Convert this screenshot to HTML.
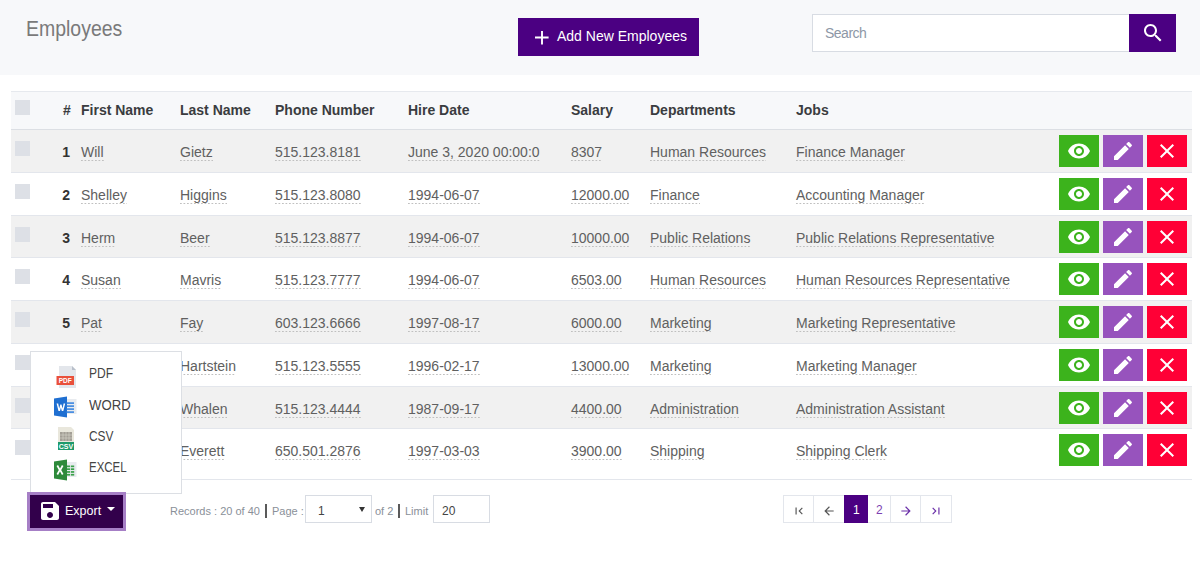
<!DOCTYPE html>
<html><head><meta charset="utf-8"><style>
*{margin:0;padding:0;box-sizing:border-box}
html,body{width:1200px;height:569px;overflow:hidden;background:#fff;font-family:"Liberation Sans",sans-serif;color:#555}
.abs{position:absolute}
.ic{position:absolute;left:8px;top:4px;width:24px;height:24px}
#top{position:absolute;left:0;top:0;width:1200px;height:75px;background:#f7f8fa}
#title{position:absolute;left:26.3px;top:16px;font-size:22px;line-height:26px;color:#7a7a7a;transform-origin:0 0;transform:scaleX(0.885);white-space:nowrap}
#add{position:absolute;left:518px;top:18px;width:181px;height:38px;background:#4b0082;color:#fff;font-size:14px}
#add .t{position:absolute;left:39px;top:10px;line-height:16px}
#search{position:absolute;left:812px;top:14px;width:318px;height:38px;background:#fff;border:1px solid #d8dce3;border-right:0}
#search .t{position:absolute;left:12px;top:10px;font-size:14px;letter-spacing:-0.5px;line-height:16px;color:#8d97a6}
#sbtn{position:absolute;left:1129px;top:14px;width:47px;height:38px;background:#4b0082}
#sbtn svg{position:absolute;left:11.5px;top:7px;width:24px;height:24px}
#thead{position:absolute;left:11px;top:91px;width:1181px;height:39px;background:#f7f8fa;border-top:1px solid #e6e9ee;border-bottom:1px solid #dcdfe4}
.hd{position:absolute;top:101.5px;font-size:14px;line-height:16px;font-weight:bold;color:#3a3c40;white-space:nowrap}
.row{position:absolute;left:11px;width:1181px;border-top:1px solid #e3e6ec}
.cb{position:absolute;left:4px;top:11px;width:15px;height:15px;background:#dde0e6}
.num{position:absolute;left:44px;width:15px;text-align:right;top:14px;font-size:14px;line-height:16px;font-weight:bold;color:#333}
.cell{position:absolute;top:14px;font-size:14px;line-height:16px;color:#606060;white-space:nowrap}
.cell u{text-decoration:none;display:inline-block;padding-bottom:1px;background-image:linear-gradient(to right,#c0c0c0 58%,rgba(0,0,0,0) 58%);background-size:3.5px 1px;background-repeat:repeat-x;background-position:0 100%}
.btn{position:absolute;top:5px;width:40px;height:32px}
.eye{left:1048px;background:#3cb31c}
.pen{left:1092px;background:#9753bd}
.del{left:1136px;background:#ff0036}
#tfoot{position:absolute;left:11px;top:479px;width:1181px;height:1px;background:#e3e6ec}
#dd{position:absolute;left:30px;top:350.5px;width:152px;height:143px;background:#fff;border:1px solid #dcdfe4}
#dd .it{position:absolute;left:57.5px;font-size:14px;line-height:16px;color:#444;transform-origin:0 0}
#export{position:absolute;left:27px;top:492px;width:98.5px;height:38.5px;background:#32004b;border:3px solid #a67fc6;color:#fff;font-size:12.5px}
#export .t{position:absolute;left:35px;top:8.5px;line-height:14px}
#export svg{position:absolute;left:8px;top:3.5px;width:24px;height:24px}
#export .caret{position:absolute;left:77px;top:11.5px;width:0;height:0;border-left:4px solid transparent;border-right:4px solid transparent;border-top:4px solid #fff}
.ft{position:absolute;top:504px;font-size:11px;line-height:14px;color:#8a9099;white-space:nowrap}
.sep{position:absolute;top:504px;width:1.6px;height:14px;background:#5a5a5a}
.box{position:absolute;top:495px;height:28px;border:1px solid #d8dce3;background:#fff;font-size:12px;color:#444}
#pg{position:absolute;left:783px;top:495px;width:169px;height:28px;border:1px solid #e3e6ec;background:#fff}
.pc{position:absolute;top:0;height:26px;border-right:1px solid #e3e6ec;font-size:12px}
.pc svg{position:absolute;width:14px;height:14px;top:7.5px}
</style></head><body>
<div id="top"></div>
<div id="title">Employees</div>
<div id="add"><svg class="abs" style="left:16.5px;top:12.6px" width="14" height="14" viewBox="0 0 14 14"><path d="M7 0V13.4M0 6.5H13.6" stroke="#fff" stroke-width="1.9"/></svg><span class="t">Add New Employees</span></div>
<div id="search"><span class="t">Search</span></div>
<div id="sbtn"><svg class="" viewBox="0 0 24 24"><path d="M15.5 14h-.79l-.28-.27C15.41 12.59 16 11.11 16 9.5 16 5.910 13.090 3 9.5 3S3 5.91 3 9.5 5.91 16 9.5 16c1.61 0 3.09-.59 4.23-1.57l.27.28v.79l5 4.99L20.49 19l-4.99-5zm-6 0C7.01 14 5 11.99 5 9.5S7.01 5 9.5 5 14 7.01 14 9.5 11.99 14 9.5 14z" fill="#fff"/></svg></div>

<div id="thead"></div>
<div class="cb" style="left:15px;top:100px"></div>
<span class="hd" style="left:63px">#</span>
<span class="hd" style="left:81px">First Name</span>
<span class="hd" style="left:180px">Last Name</span>
<span class="hd" style="left:275px">Phone Number</span>
<span class="hd" style="left:408px">Hire Date</span>
<span class="hd" style="left:571px">Salary</span>
<span class="hd" style="left:650px">Departments</span>
<span class="hd" style="left:796px">Jobs</span>

<div class="row" style="top:129.0px;height:43.75px;background:#f1f1f1;border-top-color:#dcdfe4"><div class="cb"></div><span class="num">1</span><span class="cell" style="left:70px"><u>Will</u></span><span class="cell" style="left:169px"><u>Gietz</u></span><span class="cell" style="left:264px"><u>515.123.8181</u></span><span class="cell" style="left:397px"><u>June 3, 2020 00:00:0</u></span><span class="cell" style="left:560px"><u>8307</u></span><span class="cell" style="left:639px"><u>Human Resources</u></span><span class="cell" style="left:785px"><u>Finance Manager</u></span><div class="btn eye"><svg class="ic" viewBox="0 0 24 24"><path d="M12 4.5C7 4.5 2.73 7.61 1 12c1.73 4.39 6 7.5 11 7.5s9.27-3.11 11-7.5c-1.73-4.39-6-7.5-11-7.5zM12 17c-2.76 0-5-2.24-5-5s2.24-5 5-5 5 2.24 5 5-2.24 5-5 5zm0-8c-1.66 0-3 1.34-3 3s1.34 3 3 3 3-1.34 3-3-1.34-3-3-3z" fill="#fff"/></svg></div><div class="btn pen"><svg class="ic" viewBox="0 0 24 24"><path d="M3 17.25V21h3.75L17.81 9.94l-3.75-3.75L3 17.25zM20.71 7.04c.39-.39.39-1.020 0-1.41l-2.34-2.34c-.39-.39-1.02-.39-1.41 0l-1.83 1.83 3.75 3.75 1.83-1.83z" fill="#fff"/></svg></div><div class="btn del"><svg class="ic" viewBox="0 0 24 24"><path d="M19 6.41L17.59 5 12 10.59 6.41 5 5 6.41 10.59 12 5 17.59 6.41 19 12 13.41 17.59 19 19 17.59 13.41 12z" fill="#fff"/></svg></div></div>
<div class="row" style="top:171.75px;height:43.75px;background:#fff"><div class="cb"></div><span class="num">2</span><span class="cell" style="left:70px"><u>Shelley</u></span><span class="cell" style="left:169px"><u>Higgins</u></span><span class="cell" style="left:264px"><u>515.123.8080</u></span><span class="cell" style="left:397px"><u>1994-06-07</u></span><span class="cell" style="left:560px"><u>12000.00</u></span><span class="cell" style="left:639px"><u>Finance</u></span><span class="cell" style="left:785px"><u>Accounting Manager</u></span><div class="btn eye"><svg class="ic" viewBox="0 0 24 24"><path d="M12 4.5C7 4.5 2.73 7.61 1 12c1.73 4.39 6 7.5 11 7.5s9.27-3.11 11-7.5c-1.73-4.39-6-7.5-11-7.5zM12 17c-2.76 0-5-2.24-5-5s2.24-5 5-5 5 2.24 5 5-2.24 5-5 5zm0-8c-1.66 0-3 1.34-3 3s1.34 3 3 3 3-1.34 3-3-1.34-3-3-3z" fill="#fff"/></svg></div><div class="btn pen"><svg class="ic" viewBox="0 0 24 24"><path d="M3 17.25V21h3.75L17.81 9.94l-3.75-3.75L3 17.25zM20.71 7.04c.39-.39.39-1.020 0-1.41l-2.34-2.34c-.39-.39-1.02-.39-1.41 0l-1.83 1.83 3.75 3.75 1.83-1.83z" fill="#fff"/></svg></div><div class="btn del"><svg class="ic" viewBox="0 0 24 24"><path d="M19 6.41L17.59 5 12 10.59 6.41 5 5 6.41 10.59 12 5 17.59 6.41 19 12 13.41 17.59 19 19 17.59 13.41 12z" fill="#fff"/></svg></div></div>
<div class="row" style="top:214.5px;height:43.75px;background:#f1f1f1"><div class="cb"></div><span class="num">3</span><span class="cell" style="left:70px"><u>Herm</u></span><span class="cell" style="left:169px"><u>Beer</u></span><span class="cell" style="left:264px"><u>515.123.8877</u></span><span class="cell" style="left:397px"><u>1994-06-07</u></span><span class="cell" style="left:560px"><u>10000.00</u></span><span class="cell" style="left:639px"><u>Public Relations</u></span><span class="cell" style="left:785px"><u>Public Relations Representative</u></span><div class="btn eye"><svg class="ic" viewBox="0 0 24 24"><path d="M12 4.5C7 4.5 2.73 7.61 1 12c1.73 4.39 6 7.5 11 7.5s9.27-3.11 11-7.5c-1.73-4.39-6-7.5-11-7.5zM12 17c-2.76 0-5-2.24-5-5s2.24-5 5-5 5 2.24 5 5-2.24 5-5 5zm0-8c-1.66 0-3 1.34-3 3s1.34 3 3 3 3-1.34 3-3-1.34-3-3-3z" fill="#fff"/></svg></div><div class="btn pen"><svg class="ic" viewBox="0 0 24 24"><path d="M3 17.25V21h3.75L17.81 9.94l-3.75-3.75L3 17.25zM20.71 7.04c.39-.39.39-1.020 0-1.41l-2.34-2.34c-.39-.39-1.02-.39-1.41 0l-1.83 1.83 3.75 3.75 1.83-1.83z" fill="#fff"/></svg></div><div class="btn del"><svg class="ic" viewBox="0 0 24 24"><path d="M19 6.41L17.59 5 12 10.59 6.41 5 5 6.41 10.59 12 5 17.59 6.41 19 12 13.41 17.59 19 19 17.59 13.41 12z" fill="#fff"/></svg></div></div>
<div class="row" style="top:257.25px;height:43.75px;background:#fff"><div class="cb"></div><span class="num">4</span><span class="cell" style="left:70px"><u>Susan</u></span><span class="cell" style="left:169px"><u>Mavris</u></span><span class="cell" style="left:264px"><u>515.123.7777</u></span><span class="cell" style="left:397px"><u>1994-06-07</u></span><span class="cell" style="left:560px"><u>6503.00</u></span><span class="cell" style="left:639px"><u>Human Resources</u></span><span class="cell" style="left:785px"><u>Human Resources Representative</u></span><div class="btn eye"><svg class="ic" viewBox="0 0 24 24"><path d="M12 4.5C7 4.5 2.73 7.61 1 12c1.73 4.39 6 7.5 11 7.5s9.27-3.11 11-7.5c-1.73-4.39-6-7.5-11-7.5zM12 17c-2.76 0-5-2.24-5-5s2.24-5 5-5 5 2.24 5 5-2.24 5-5 5zm0-8c-1.66 0-3 1.34-3 3s1.34 3 3 3 3-1.34 3-3-1.34-3-3-3z" fill="#fff"/></svg></div><div class="btn pen"><svg class="ic" viewBox="0 0 24 24"><path d="M3 17.25V21h3.75L17.81 9.94l-3.75-3.75L3 17.25zM20.71 7.04c.39-.39.39-1.020 0-1.41l-2.34-2.34c-.39-.39-1.02-.39-1.41 0l-1.83 1.83 3.75 3.75 1.83-1.83z" fill="#fff"/></svg></div><div class="btn del"><svg class="ic" viewBox="0 0 24 24"><path d="M19 6.41L17.59 5 12 10.59 6.41 5 5 6.41 10.59 12 5 17.59 6.41 19 12 13.41 17.59 19 19 17.59 13.41 12z" fill="#fff"/></svg></div></div>
<div class="row" style="top:300.0px;height:43.75px;background:#f1f1f1"><div class="cb"></div><span class="num">5</span><span class="cell" style="left:70px"><u>Pat</u></span><span class="cell" style="left:169px"><u>Fay</u></span><span class="cell" style="left:264px"><u>603.123.6666</u></span><span class="cell" style="left:397px"><u>1997-08-17</u></span><span class="cell" style="left:560px"><u>6000.00</u></span><span class="cell" style="left:639px"><u>Marketing</u></span><span class="cell" style="left:785px"><u>Marketing Representative</u></span><div class="btn eye"><svg class="ic" viewBox="0 0 24 24"><path d="M12 4.5C7 4.5 2.73 7.61 1 12c1.73 4.39 6 7.5 11 7.5s9.27-3.11 11-7.5c-1.73-4.39-6-7.5-11-7.5zM12 17c-2.76 0-5-2.24-5-5s2.24-5 5-5 5 2.24 5 5-2.24 5-5 5zm0-8c-1.66 0-3 1.34-3 3s1.34 3 3 3 3-1.34 3-3-1.34-3-3-3z" fill="#fff"/></svg></div><div class="btn pen"><svg class="ic" viewBox="0 0 24 24"><path d="M3 17.25V21h3.75L17.81 9.94l-3.75-3.75L3 17.25zM20.71 7.04c.39-.39.39-1.020 0-1.41l-2.34-2.34c-.39-.39-1.02-.39-1.41 0l-1.83 1.83 3.75 3.75 1.83-1.83z" fill="#fff"/></svg></div><div class="btn del"><svg class="ic" viewBox="0 0 24 24"><path d="M19 6.41L17.59 5 12 10.59 6.41 5 5 6.41 10.59 12 5 17.59 6.41 19 12 13.41 17.59 19 19 17.59 13.41 12z" fill="#fff"/></svg></div></div>
<div class="row" style="top:342.75px;height:43.75px;background:#fff"><div class="cb"></div><span class="num">6</span><span class="cell" style="left:70px"><u>Michael</u></span><span class="cell" style="left:169px"><u>Hartstein</u></span><span class="cell" style="left:264px"><u>515.123.5555</u></span><span class="cell" style="left:397px"><u>1996-02-17</u></span><span class="cell" style="left:560px"><u>13000.00</u></span><span class="cell" style="left:639px"><u>Marketing</u></span><span class="cell" style="left:785px"><u>Marketing Manager</u></span><div class="btn eye"><svg class="ic" viewBox="0 0 24 24"><path d="M12 4.5C7 4.5 2.73 7.61 1 12c1.73 4.39 6 7.5 11 7.5s9.27-3.11 11-7.5c-1.73-4.39-6-7.5-11-7.5zM12 17c-2.76 0-5-2.24-5-5s2.24-5 5-5 5 2.24 5 5-2.24 5-5 5zm0-8c-1.66 0-3 1.34-3 3s1.34 3 3 3 3-1.34 3-3-1.34-3-3-3z" fill="#fff"/></svg></div><div class="btn pen"><svg class="ic" viewBox="0 0 24 24"><path d="M3 17.25V21h3.75L17.81 9.94l-3.75-3.75L3 17.25zM20.71 7.04c.39-.39.39-1.020 0-1.41l-2.34-2.34c-.39-.39-1.02-.39-1.41 0l-1.83 1.83 3.75 3.75 1.83-1.83z" fill="#fff"/></svg></div><div class="btn del"><svg class="ic" viewBox="0 0 24 24"><path d="M19 6.41L17.59 5 12 10.59 6.41 5 5 6.41 10.59 12 5 17.59 6.41 19 12 13.41 17.59 19 19 17.59 13.41 12z" fill="#fff"/></svg></div></div>
<div class="row" style="top:385.5px;height:43.75px;background:#f1f1f1"><div class="cb"></div><span class="num">7</span><span class="cell" style="left:70px"><u>Jennifer</u></span><span class="cell" style="left:169px"><u>Whalen</u></span><span class="cell" style="left:264px"><u>515.123.4444</u></span><span class="cell" style="left:397px"><u>1987-09-17</u></span><span class="cell" style="left:560px"><u>4400.00</u></span><span class="cell" style="left:639px"><u>Administration</u></span><span class="cell" style="left:785px"><u>Administration Assistant</u></span><div class="btn eye"><svg class="ic" viewBox="0 0 24 24"><path d="M12 4.5C7 4.5 2.73 7.61 1 12c1.73 4.39 6 7.5 11 7.5s9.27-3.11 11-7.5c-1.73-4.39-6-7.5-11-7.5zM12 17c-2.76 0-5-2.24-5-5s2.24-5 5-5 5 2.24 5 5-2.24 5-5 5zm0-8c-1.66 0-3 1.34-3 3s1.34 3 3 3 3-1.34 3-3-1.34-3-3-3z" fill="#fff"/></svg></div><div class="btn pen"><svg class="ic" viewBox="0 0 24 24"><path d="M3 17.25V21h3.75L17.81 9.94l-3.75-3.75L3 17.25zM20.71 7.04c.39-.39.39-1.020 0-1.41l-2.34-2.34c-.39-.39-1.02-.39-1.41 0l-1.83 1.83 3.75 3.75 1.83-1.83z" fill="#fff"/></svg></div><div class="btn del"><svg class="ic" viewBox="0 0 24 24"><path d="M19 6.41L17.59 5 12 10.59 6.41 5 5 6.41 10.59 12 5 17.59 6.41 19 12 13.41 17.59 19 19 17.59 13.41 12z" fill="#fff"/></svg></div></div>
<div class="row" style="top:428.25px;height:43.75px;background:#fff"><div class="cb"></div><span class="num">8</span><span class="cell" style="left:70px"><u>Britney</u></span><span class="cell" style="left:169px"><u>Everett</u></span><span class="cell" style="left:264px"><u>650.501.2876</u></span><span class="cell" style="left:397px"><u>1997-03-03</u></span><span class="cell" style="left:560px"><u>3900.00</u></span><span class="cell" style="left:639px"><u>Shipping</u></span><span class="cell" style="left:785px"><u>Shipping Clerk</u></span><div class="btn eye"><svg class="ic" viewBox="0 0 24 24"><path d="M12 4.5C7 4.5 2.73 7.61 1 12c1.73 4.39 6 7.5 11 7.5s9.27-3.11 11-7.5c-1.73-4.39-6-7.5-11-7.5zM12 17c-2.76 0-5-2.24-5-5s2.24-5 5-5 5 2.24 5 5-2.24 5-5 5zm0-8c-1.66 0-3 1.34-3 3s1.34 3 3 3 3-1.34 3-3-1.34-3-3-3z" fill="#fff"/></svg></div><div class="btn pen"><svg class="ic" viewBox="0 0 24 24"><path d="M3 17.25V21h3.75L17.81 9.94l-3.75-3.75L3 17.25zM20.71 7.04c.39-.39.39-1.020 0-1.41l-2.34-2.34c-.39-.39-1.02-.39-1.41 0l-1.83 1.83 3.75 3.75 1.83-1.83z" fill="#fff"/></svg></div><div class="btn del"><svg class="ic" viewBox="0 0 24 24"><path d="M19 6.41L17.59 5 12 10.59 6.41 5 5 6.41 10.59 12 5 17.59 6.41 19 12 13.41 17.59 19 19 17.59 13.41 12z" fill="#fff"/></svg></div></div>
<div id="tfoot"></div>

<div id="dd">
 <svg class="abs" style="left:24px;top:13px" width="22" height="24" viewBox="0 0 22 24"><path d="M4 1h13l4 4v18H4z" fill="#e3e6eb"/><path d="M17 1l4 4h-4z" fill="#b8bfca"/><rect x="1.5" y="11" width="17.5" height="9" fill="#e9503b"/><text x="10.25" y="18.3" font-family="Liberation Sans" font-weight="bold" font-size="6.5" fill="#fff" text-anchor="middle">PDF</text></svg><svg class="abs" style="left:22px;top:44.5px" width="24" height="22" viewBox="0 0 24 22"><rect x="13" y="3" width="10.5" height="15" fill="#e8ebef"/><path d="M1 2.5L14 0.5V21.5L1 19.5z" fill="#1f6fd1"/><rect x="13.5" y="6.3" width="7.5" height="1.6" fill="#3a86e0"/><rect x="13.5" y="9.3" width="7.5" height="1.6" fill="#3a86e0"/><rect x="13.5" y="12.3" width="7.5" height="1.6" fill="#3a86e0"/><rect x="13.5" y="15.3" width="7.5" height="1.6" fill="#3a86e0"/><path d="M3.6 7.5h1.6l1 5 1.1-4h1.2l1.1 4 1-5h1.6l-1.9 7.5H8.8L7.9 11.6 7 15H5.5z" fill="#fff"/></svg><svg class="abs" style="left:25.5px;top:74.3px" width="18" height="25" viewBox="0 0 18 25"><path d="M1 1h13l3 3v18H1z" fill="#e9e7dc"/><rect x="3" y="6" width="12" height="9" fill="#a39f96"/><path d="M3 9h12M3 12h12M6 6v9M9 6v9M12 6v9" stroke="#d9d6cc" stroke-width="0.6"/><rect x="1" y="16" width="16" height="8" fill="#1e9a6b"/><text x="9" y="22.6" font-family="Liberation Sans" font-weight="bold" font-size="7" fill="#fff" text-anchor="middle">CSV</text></svg><svg class="abs" style="left:22px;top:107.5px" width="24" height="22" viewBox="0 0 24 22"><rect x="13" y="3" width="10.5" height="15" fill="#e8ebef"/><path d="M1 2.5L14 0.5V21.5L1 19.5z" fill="#2e8a3b"/><g fill="#3aa14a"><rect x="14" y="6.5" width="3.2" height="1.7"/><rect x="18" y="6.5" width="3.2" height="1.7"/><rect x="14" y="9.3" width="3.2" height="1.7"/><rect x="18" y="9.3" width="3.2" height="1.7"/><rect x="14" y="12.1" width="3.2" height="1.7"/><rect x="18" y="12.1" width="3.2" height="1.7"/><rect x="14" y="14.9" width="3.2" height="1.7"/><rect x="18" y="14.9" width="3.2" height="1.7"/></g><path d="M4.3 6.5L6.8 11 4.3 15.5M9.7 6.5L7.2 11 9.7 15.5" stroke="#fff" stroke-width="1.7" fill="none"/></svg>
 <span class="it" style="top:13px;transform:scaleX(0.86)">PDF</span>
 <span class="it" style="top:45px;transform:scaleX(0.94)">WORD</span>
 <span class="it" style="top:76px;transform:scaleX(0.85)">CSV</span>
 <span class="it" style="top:107px;transform:scaleX(0.82)">EXCEL</span>
</div>

<div id="export"><svg class="" viewBox="0 0 24 24"><path d="M17 3H5c-1.11 0-2 .9-2 2v14c0 1.1.89 2 2 2h14c1.1 0 2-.9 2-2V7l-4-4zm-5 16c-1.66 0-3-1.34-3-3s1.34-3 3-3 3 1.34 3 3-1.34 3-3 3zm3-10H5V5h10v4z" fill="#fff"/></svg><span class="t">Export</span><div class="caret"></div></div>

<span class="ft" style="left:170px">Records : 20 of 40</span>
<div class="sep" style="left:265px"></div>
<span class="ft" style="left:272px">Page :</span>
<div class="box" style="left:305px;width:67px"><span class="abs" style="left:12px;top:8px;line-height:14px">1</span><svg class="abs" style="left:53px;top:11px" width="6" height="5" viewBox="0 0 6 5"><path d="M0 0h6L3 5z" fill="#333"/></svg></div>
<span class="ft" style="left:375px">of 2</span>
<div class="sep" style="left:398px"></div>
<span class="ft" style="left:405px">Limit</span>
<div class="box" style="left:433px;width:57px"><span class="abs" style="left:8px;top:8px;line-height:14px">20</span></div>

<div id="pg">
 <div class="pc" style="left:0;width:30px"><svg style="left:7.5px" class="" viewBox="0 0 24 24"><path d="M18.41 16.59L13.82 12l4.59-4.59L17 6l-6 6 6 6zM6 6h2v12H6z" fill="#555"/></svg></div>
 <div class="pc" style="left:30px;width:31px"><svg style="left:8.4px" class="" viewBox="0 0 24 24"><path d="M20 11H7.83l5.59-5.59L12 4l-8 8 8 8 1.41-1.41L7.83 13H20v-2z" fill="#555"/></svg></div>
 <div class="pc" style="left:60px;width:24px;top:-1px;height:28px;background:#4b0082;color:#fff;border-right:0"><span class="abs" style="left:9px;top:8px;line-height:14px">1</span></div>
 <div class="pc" style="left:84px;width:23px;color:#7d3fb2"><span class="abs" style="left:8px;top:7px;line-height:14px">2</span></div>
 <div class="pc" style="left:107px;width:30px"><svg style="left:7.5px" class="" viewBox="0 0 24 24"><path d="M12 4l-1.41 1.41L16.17 11H4v2h12.17l-5.58 5.59L12 20l8-8z" fill="#6a2fa8"/></svg></div>
 <div class="pc" style="left:137px;width:31px;border-right:0"><svg style="left:8px" class="" viewBox="0 0 24 24"><path d="M5.59 7.41L10.18 12l-4.59 4.59L7 18l6-6-6-6zM16 6h2v12h-2z" fill="#6a2fa8"/></svg></div>
</div>
</body></html>
